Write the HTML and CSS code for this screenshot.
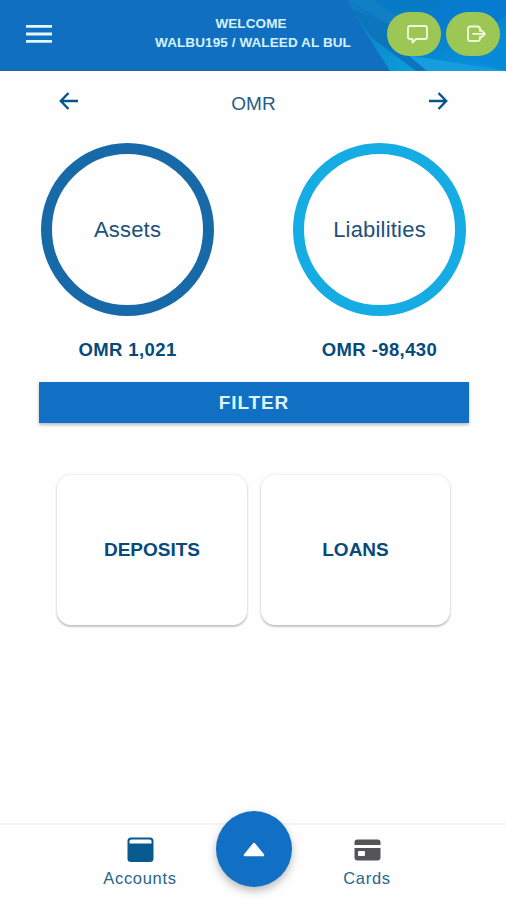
FILE: index.html
```html
<!DOCTYPE html>
<html lang="en">
<head>
<meta charset="utf-8">
<meta name="viewport" content="width=device-width">
<title>Accounts</title>
<link rel="stylesheet" href="styles.css">
</head>
<body>
<header class="header">
  <svg class="header-art" viewBox="0 0 170 71" aria-hidden="true">
    <defs>
      <linearGradient id="sky" x1="0" y1="0" x2="1" y2="1">
        <stop offset="0" stop-color="#1174c6"/>
        <stop offset="0.5" stop-color="#087fca"/>
        <stop offset="1" stop-color="#0896df"/>
      </linearGradient>
      <linearGradient id="teal" x1="0" y1="0" x2="1" y2="1">
        <stop offset="0" stop-color="#1079c2"/>
        <stop offset="1" stop-color="#0a9fdb"/>
      </linearGradient>
    </defs>
    <path d="M12 0H170V71H54Z" fill="url(#sky)"/>
    <path d="M12 0L17 12L54 71H85L52 30Z" fill="url(#teal)"/>
    <path d="M14 8L55 25L64 35L91 71H80L36 38Z" fill="#0b76bb"/>
    <path d="M12 0H38L66 19L58 27Z" fill="#107fc5"/>
    <path d="M38 0H122L66 20Z" fill="#087bc7"/>
    <path d="M170 0V16L120 45L96 10L122 0Z" fill="#077bd0"/>
    <path d="M72 55L170 71H91Z" fill="#159de0"/>
    <path d="M110 53L170 39V71Z" fill="#078bd8"/>
  </svg>
  <button class="menu" aria-label="Menu">
    <svg width="26" height="18" viewBox="0 0 26 18"><path d="M0 1.4H26M0 9H26M0 16.4H26" stroke="#e3f8ff" stroke-width="2.8"/></svg>
  </button>
  <div class="welcome">
    <div>WELCOME</div>
    <div>WALBU195 / WALEED AL BUL</div>
  </div>
  <div class="actions">
    <button class="pill" aria-label="Messages">
      <svg width="24" height="22" viewBox="0 0 24 22"><path d="M4 2H19Q21 2 21 4V13Q21 15 19 15H10L6.5 18.5V15H4Q2 15 2 13V4Q2 2 4 2Z"/></svg>
    </button>
    <button class="pill" aria-label="Log out">
      <svg width="24" height="22" viewBox="0 0 24 22"><path d="M15 7V5Q15 2.5 12.5 2.5H5.5Q3 2.5 3 5V14.5Q3 17 5.5 17H12.5Q15 17 15 14.5V12.5M8 9.8H20M16.5 6.3L20 9.8L16.5 13.3"/></svg>
    </button>
  </div>
</header>
<main class="main">
  <div class="currency">
    <svg class="arrow" width="20" height="18" viewBox="0 0 20 18"><path d="M19 9H2M9.5 1L1.8 9L9.5 17"/></svg>
    <span class="currency-name">OMR</span>
    <svg class="arrow" width="20" height="18" viewBox="0 0 20 18"><path d="M1 9H18M10.5 1L18.2 9L10.5 17"/></svg>
  </div>
  <section class="totals">
    <div class="total">
      <div class="ring">Assets</div>
      <div class="amount">OMR 1,021</div>
    </div>
    <div class="total">
      <div class="ring ring-light">Liabilities</div>
      <div class="amount">OMR -98,430</div>
    </div>
  </section>
  <button class="filter">FILTER</button>
  <section class="cards">
    <div class="card">DEPOSITS</div>
    <div class="card">LOANS</div>
  </section>
</main>
<nav class="nav">
  <div class="tab">
    <svg width="28" height="26" viewBox="0 0 28 26"><rect x="1.5" y="0.5" width="26" height="24.5" rx="3.5" fill="#075990"/><path d="M3.5 4Q3.5 2.5 5.5 2.5H23.5Q25.5 2.5 25.5 4V6.5H3.5Z" fill="#fff"/></svg>
    <span>Accounts</span>
  </div>
  <button class="fab" aria-label="More">
    <svg width="22" height="15" viewBox="0 0 22 15"><path d="M2 13H20L11 2Z" fill="#fff" stroke="#fff" stroke-width="2.5" stroke-linejoin="round"/></svg>
  </button>
  <div class="tab">
    <svg width="28" height="26" viewBox="0 0 28 26"><path d="M1.5 8V5Q1.5 2.5 4.5 2.5H24.5Q27.5 2.5 27.5 5V8ZM1.5 11H27.5V20.5Q27.5 23.5 24.5 23.5H4.5Q1.5 23.5 1.5 20.5Z" fill="#555456"/><rect x="5" y="14" width="7" height="5" rx="1" fill="#fff"/></svg>
    <span>Cards</span>
  </div>
</nav>
</body>
</html>
```
FILE: styles.css
```css
* { box-sizing: border-box; }

body {
  margin: 0;
  height: 900px;
  display: flex;
  flex-direction: column;
  overflow: hidden;
  background: #fefefe;
  color: #064a7c;
  font-family: "Liberation Sans", Arial, sans-serif;
}

button {
  border: 0;
  padding: 0;
  background: none;
  font-family: inherit;
}

svg { display: block; }

.header {
  position: relative;
  height: 71px;
  display: grid;
  grid-template-columns: 127px 252px 127px;
  background: #116fc2;
  border-bottom: 1px solid #1b65ad;
}

.header-art {
  position: absolute;
  top: 0;
  right: 0;
  width: 170px;
  height: 71px;
}

.menu {
  align-self: start;
  padding: 25px 0 0 26px;
}

.welcome {
  position: relative;
  padding-top: 14px;
  text-align: center;
  color: #d5f2ff;
  font-size: 13.5px;
  font-weight: bold;
  line-height: 19px;
  letter-spacing: 0.1px;
}

.welcome div:first-child { padding-right: 4px; }

.actions {
  position: relative;
  display: flex;
  align-items: flex-start;
  gap: 5px;
  padding: 12px 0 0 8px;
}

.pill {
  width: 54px;
  height: 44px;
  padding: 2px 0 0 8px;
  display: flex;
  align-items: center;
  justify-content: center;
  border-radius: 22px;
  background: #9dc754;
}

.pill svg {
  fill: none;
  stroke: #f0fadc;
  stroke-width: 1.8;
  stroke-linejoin: round;
  stroke-linecap: round;
}

.main { flex: 1; }

.currency {
  display: flex;
  justify-content: space-between;
  align-items: flex-start;
  height: 72px;
  padding: 21px 58px 0 59px;
}

.arrow {
  fill: none;
  stroke: #075486;
  stroke-width: 2.4;
}

.currency-name {
  padding-top: 1px;
  font-size: 19px;
  line-height: 22px;
  color: #285d86;
}

.totals {
  display: flex;
  justify-content: space-between;
  padding: 0 40px 0 41px;
}

.total {
  width: 173px;
  text-align: center;
}

.ring {
  height: 173px;
  display: flex;
  align-items: center;
  justify-content: center;
  border: 11px solid #1769a8;
  border-radius: 50%;
  font-size: 22px;
  letter-spacing: 0.2px;
  color: #20517a;
}

.ring-light { border-color: #14ace2; }

.amount {
  margin-top: 23px;
  height: 22px;
  font-size: 18.5px;
  line-height: 22px;
  font-weight: bold;
  letter-spacing: 0.4px;
}

.filter {
  display: block;
  width: 430px;
  height: 41px;
  margin: 21px 0 0 39px;
  background: #1170c3;
  color: #def5ff;
  font-size: 19px;
  font-weight: bold;
  letter-spacing: 0.9px;
  box-shadow: 0 2px 3px #0004;
}

.cards {
  display: grid;
  grid-template-columns: 190px 189px;
  gap: 14px;
  padding: 52px 0 0 57px;
}

.card {
  height: 150px;
  display: flex;
  align-items: center;
  justify-content: center;
  border-radius: 14px;
  background: #fff;
  font-size: 19px;
  font-weight: bold;
  box-shadow: 0 2px 2px #0003, 0 0 3px #0002;
}

.nav {
  height: 77px;
  display: grid;
  grid-template-columns: 152px 76px 150px;
  padding-left: 64px;
  padding-right: 64px;
  border-top: 2px solid #f4f4f4;
}

.nav .tab {
  display: flex;
  flex-direction: column;
  align-items: center;
  padding-top: 12px;
  font-size: 16.5px;
  letter-spacing: 0.7px;
  color: #29648e;
}

.tab span {
  margin-top: 5px;
  line-height: 20px;
}

.fab {
  width: 76px;
  height: 76px;
  margin-top: -14px;
  display: flex;
  align-items: center;
  justify-content: center;
  border-radius: 50%;
  background: #1170c3;
  box-shadow: 0 4px 9px #0004;
}
```
